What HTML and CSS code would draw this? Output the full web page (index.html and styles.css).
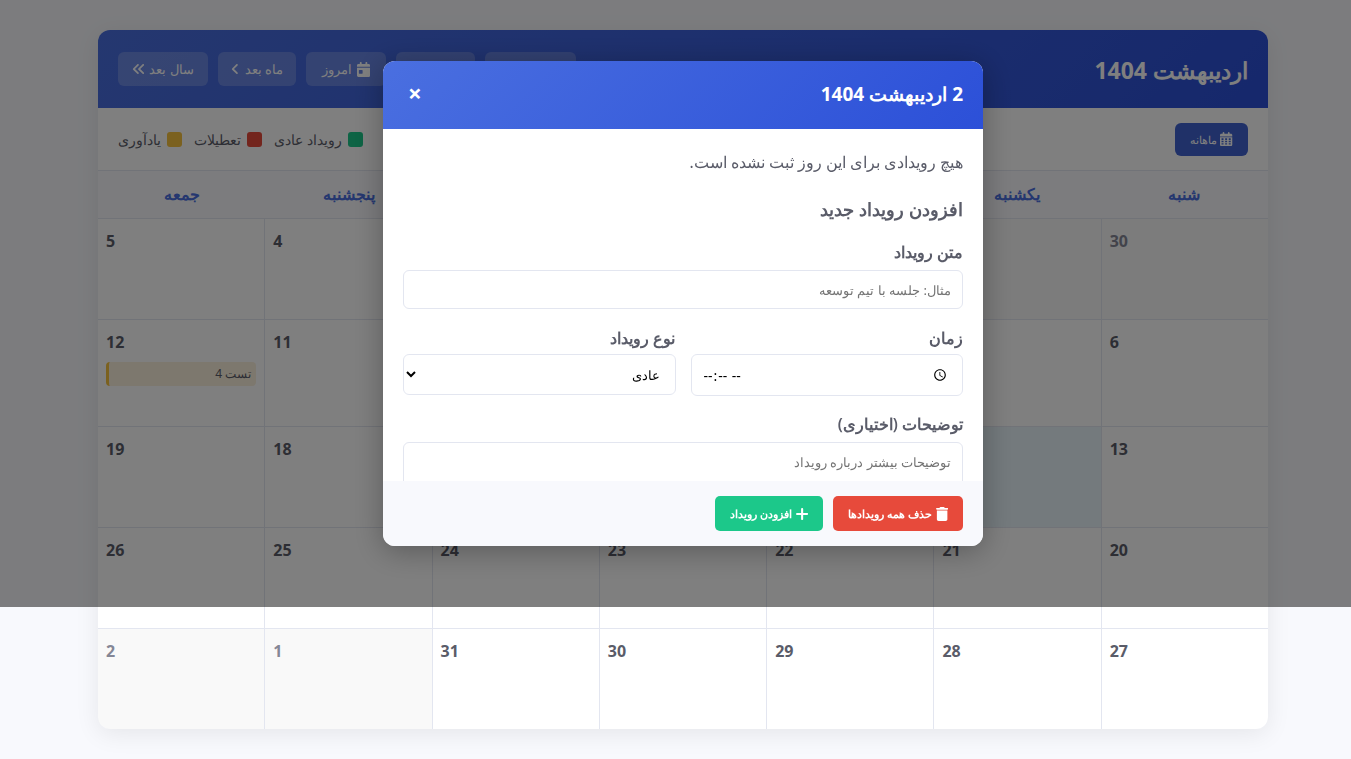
FILE: index.html
```html
<!DOCTYPE html>
<html lang="fa" dir="rtl">
<head>
<meta charset="utf-8">
<title>تقویم</title>
<link rel="stylesheet" href="styles.css">
</head>
<body>
<div class="calendar">
  <header class="cal-header">
    <h1 class="cal-title">اردیبهشت 1404</h1>
    <nav class="nav">
      <button class="nav-btn w91"><svg class="ic" viewBox="0 0 448 512"><path d="M366 273 212 427c-13 13-33 13-45 0s-13-33 0-45l131-126L167 130c-13-13-13-33 0-45s33-13 45 0l154 143c13 12 13 32 0 45zM214 273 60 427c-13 13-33 13-45 0s-13-33 0-45l131-126L15 130C2 117 2 97 15 85s33-13 45 0l154 143c13 12 13 32 0 45z"/></svg>سال قبل</button>
      <button class="nav-btn w79"><svg class="ic" viewBox="0 0 320 512"><path d="M279 273 125 427c-13 13-33 13-45 0s-13-33 0-45l131-126L80 130c-13-13-13-33 0-45s33-13 45 0l154 143c13 12 13 32 0 45z"/></svg>ماه قبل</button>
      <button class="nav-btn w80"><svg class="ic ic-cal" viewBox="0 0 448 512"><path d="M128 0c18 0 32 14 32 32v32h128V32c0-18 14-32 32-32s32 14 32 32v32h48c27 0 48 21 48 48v48H0v-48c0-27 21-48 48-48h48V32c0-18 14-32 32-32zM0 192h448v272c0 27-21 48-48 48H48c-27 0-48-21-48-48V192zm80 80c-9 0-16 7-16 16v96c0 9 7 16 16 16h96c9 0 16-7 16-16v-96c0-9-7-16-16-16H80z"/></svg>امروز</button>
      <button class="nav-btn w78">ماه بعد<svg class="ic" viewBox="0 0 320 512"><path d="M41 239 195 85c13-13 33-13 45 0s13 33 0 45L109 256l131 126c13 13 13 33 0 45s-33 13-45 0L41 284c-13-12-13-32 0-45z"/></svg></button>
      <button class="nav-btn w90">سال بعد<svg class="ic" viewBox="0 0 448 512"><path d="M41 239 195 85c13-13 33-13 45 0s13 33 0 45L109 256l131 126c13 13 13 33 0 45s-33 13-45 0L41 284c-13-12-13-32 0-45zM233 239 387 85c13-13 33-13 45 0s13 33 0 45L301 256l131 126c13 13 13 33 0 45s-33 13-45 0L233 284c-13-12-13-32 0-45z"/></svg></button>
    </nav>
  </header>
  <div class="toolbar">
    <button class="view-btn"><svg class="ic" viewBox="0 0 448 512"><path d="M128 0c18 0 32 14 32 32v32h128V32c0-18 14-32 32-32s32 14 32 32v32h48c27 0 48 21 48 48v48H0v-48c0-27 21-48 48-48h48V32c0-18 14-32 32-32zM0 192h448v272c0 27-21 48-48 48H48c-27 0-48-21-48-48V192zm56 40v56h72v-56H56zm132 0v56h72v-56h-72zm132 0v56h72v-56h-72zM56 320v56h72v-56H56zm132 0v56h72v-56h-72zm132 0v56h72v-56h-72zM56 408v48h72v-48H56zm132 0v48h72v-48h-72zm132 0v48h72v-48h-72z"/></svg>ماهانه</button>
    <div class="legend">
      <span class="legend-item"><i class="swatch sw-green"></i>رویداد عادی</span>
      <span class="legend-item"><i class="swatch sw-red"></i>تعطیلات</span>
      <span class="legend-item"><i class="swatch sw-yellow"></i>یادآوری</span>
    </div>
  </div>
  <div class="weekdays">
    <div>شنبه</div><div>یکشنبه</div><div>دوشنبه</div><div>سه‌شنبه</div><div>چهارشنبه</div><div>پنجشنبه</div><div>جمعه</div>
  </div>
  <div class="grid">
    <div class="day other"><b>30</b></div><div class="day other"><b>31</b></div><div class="day"><b>1</b></div><div class="day"><b>2</b></div><div class="day"><b>3</b></div><div class="day"><b>4</b></div><div class="day"><b>5</b></div>
    <div class="day"><b>6</b></div><div class="day"><b>7</b></div><div class="day"><b>8</b></div><div class="day"><b>9</b></div><div class="day"><b>10</b></div><div class="day"><b>11</b></div><div class="day"><b>12</b><div class="event">تست 4</div></div>
    <div class="day"><b>13</b></div><div class="day today"><b>14</b></div><div class="day"><b>15</b></div><div class="day"><b>16</b></div><div class="day"><b>17</b></div><div class="day"><b>18</b></div><div class="day"><b>19</b></div>
    <div class="day"><b>20</b></div><div class="day"><b>21</b></div><div class="day"><b>22</b></div><div class="day"><b>23</b></div><div class="day"><b>24</b></div><div class="day"><b>25</b></div><div class="day"><b>26</b></div>
    <div class="day"><b>27</b></div><div class="day"><b>28</b></div><div class="day"><b>29</b></div><div class="day"><b>30</b></div><div class="day"><b>31</b></div><div class="day other"><b>1</b></div><div class="day other"><b>2</b></div>
  </div>
</div>
<div class="overlay">
  <div class="modal">
    <div class="modal-head">
      <h3 class="modal-title">2 اردیبهشت 1404</h3>
      <button class="close">×</button>
    </div>
    <div class="modal-body">
      <p class="empty">هیچ رویدادی برای این روز ثبت نشده است.</p>
      <h4 class="add-title">افزودن رویداد جدید</h4>
      <div class="field">
        <label class="lbl">متن رویداد</label>
        <input class="inp" type="text" placeholder="مثال: جلسه با تیم توسعه">
      </div>
      <div class="row">
        <div class="col">
          <label class="lbl lbl-tight">زمان</label>
          <input class="inp inp-time" type="time">
        </div>
        <div class="col">
          <label class="lbl lbl-tight">نوع رویداد</label>
          <select class="inp inp-sel"><option>عادی</option></select>
        </div>
      </div>
      <div class="field">
        <label class="lbl">توضیحات (اختیاری)</label>
        <textarea class="inp area" placeholder="توضیحات بیشتر درباره رویداد"></textarea>
      </div>
    </div>
    <div class="modal-foot">
      <button class="act danger"><svg class="ic" viewBox="0 0 448 512"><path d="M135 18C140 7 151 0 164 0h120c13 0 24 7 29 18l7 14h96c18 0 32 14 32 32s-14 32-32 32H32C14 96 0 82 0 64s14-32 32-32h96l7-14zM32 128h384v320c0 35-29 64-64 64H96c-35 0-64-29-64-64V128z"/></svg>حذف همه رویدادها</button>
      <button class="act success"><svg class="ic" viewBox="0 0 448 512"><path d="M262 72c0-21-17-38-38-38s-38 17-38 38v146H40c-21 0-38 17-38 38s17 38 38 38h146v146c0 21 17 38 38 38s38-17 38-38V294h146c21 0 38-17 38-38s-17-38-38-38H262V72z"/></svg>افزودن رویداد</button>
    </div>
  </div>
</div>
</body>
</html>
```
FILE: styles.css
```css
* { box-sizing: border-box; }
html { overflow: hidden; }
html, body { margin: 0; padding: 0; }
body {
  background: #f8f9fd;
  font-family: "Noto Sans", sans-serif;
  color: #5a5c69;
  height: 759px;
  overflow: hidden;
  padding: 30px 83px 0;
}
.calendar {
  width: 1170px;
  height: 699px;
  background: #fff;
  border-radius: 12px;
  overflow: hidden;
  box-shadow: 0 5px 25px rgba(0, 0, 0, .08);
  display: flex;
  flex-direction: column;
}
.ic { height: 1em; width: auto; fill: currentColor; flex: none; }
button { font-family: inherit; border: 0; cursor: pointer; }

.cal-header {
  height: 78px;
  padding: 0 20px;
  background: linear-gradient(135deg, #4a6fe0, #2c50d8);
  color: #fff;
  display: flex;
  justify-content: space-between;
  align-items: center;
}
.cal-title { margin: 2px 0 0; font-size: 23px; font-weight: 700; }
.nav { display: flex; gap: 10px; }
.nav-btn {
  height: 34px;
  padding: 0;
  border-radius: 6px;
  background: rgba(255, 255, 255, .2);
  color: #fff;
  font-size: 13px;
  display: flex;
  align-items: center;
  justify-content: center;
  gap: 5px;
}
.w78 { width: 78px; }
.w79 { width: 79px; }
.w80 { width: 80px; }
.w90 { width: 90px; }
.w91 { width: 91px; }
.nav-btn .ic { font-size: 14px; }
.nav-btn .ic-cal { font-size: 15px; }

.toolbar {
  height: 63px;
  padding: 0 20px;
  border-bottom: 1px solid #e3e6f0;
  display: flex;
  justify-content: space-between;
  align-items: center;
  background: #fff;
}
.view-btn {
  height: 33px;
  width: 73px;
  border-radius: 6px;
  background: #4163d0;
  color: #fff;
  font-size: 11px;
  display: flex;
  align-items: center;
  justify-content: center;
  gap: 3px;
}
.view-btn .ic { font-size: 14px; }
.legend { display: flex; gap: 12px; font-size: 14px; }
.legend-item { display: flex; align-items: center; gap: 6px; }
.swatch { width: 15px; height: 15px; border-radius: 3px; display: block; }
.sw-green { background: #1cc88a; }
.sw-red { background: #e74a3b; }
.sw-yellow { background: #f6c23e; }

.weekdays {
  height: 48px;
  display: grid;
  grid-template-columns: repeat(7, 1fr);
  background: #f8f9fd;
  border-bottom: 1px solid #e3e6f0;
  color: #4a6fe0;
  font-size: 15.5px;
  font-weight: 700;
  text-align: center;
  line-height: 47px;
}
.grid {
  flex: 1;
  display: grid;
  gap: 1px;
  background: #e3e6f0;
  grid-template-columns: repeat(7, 1fr);
  grid-template-rows: 100px 106px 100px 100px 100px;
}
.day {
  padding: 9px 8px 8px;
  background: #fff;
  display: flex;
  flex-direction: column;
  align-items: flex-end;
  font-size: 16px;
}
.day b { line-height: 27px; display: block; }
.other { background: #f9f9f9; color: #858796; }
.today { background: #e8f5fb; }
.event {
  align-self: stretch;
  margin-top: 6px;
  height: 24px;
  line-height: 24px;
  padding: 0 5px;
  background: #faf0dc;
  border-left: 3px solid #f6c23e;
  border-radius: 4px;
  font-size: 12px;
  color: #5a5c69;
}

.overlay {
  position: fixed;
  top: 0;
  left: 0;
  width: 1366px;
  height: 607px;
  background: rgba(0, 0, 0, .5);
  display: flex;
  align-items: center;
  justify-content: center;
}
.modal {
  width: 600px;
  height: 485px;
  background: #fff;
  border-radius: 12px;
  overflow: hidden;
  box-shadow: 0 5px 30px rgba(0, 0, 0, .3);
  display: flex;
  flex-direction: column;
}
.modal-head {
  height: 68px;
  flex: none;
  padding: 0 20px 2px;
  background: linear-gradient(135deg, #4a6fe0, #2c50d8);
  color: #fff;
  display: flex;
  justify-content: space-between;
  align-items: center;
}
.modal-title { margin: 0; font-size: 19px; font-weight: 700; }
.close { background: none; color: #fff; font-size: 24px; font-weight: 700; padding: 0 5px 2px; line-height: 1; }
.modal-body { flex: 1; padding: 20px; overflow: hidden; }
.empty { margin: 0 0 22px; font-size: 15.6px; line-height: 26px; }
.add-title { margin: 0 0 19px; font-size: 18.3px; font-weight: 700; line-height: 24px; }
.field { margin-bottom: 17px; }
.lbl { display: block; font-size: 15.7px; font-weight: 600; margin-bottom: 6px; line-height: 24px; }
.lbl-tight { margin-bottom: 4px; }
.inp {
  display: block;
  width: 100%;
  height: 39px;
  padding: 0 11px;
  border: 1px solid #e3e6f0;
  border-radius: 6px;
  background: #fff;
  font-family: inherit;
  font-size: 13px;
}
.inp-time { height: 42px; font-size: 14px; }
.inp-sel { height: 41px; }
.area { height: 90px; padding: 10px 11px; resize: none; }
.row { display: flex; gap: 15px; align-items: flex-start; margin-bottom: 16px; }
.col { flex: 1; }
.modal-foot {
  height: 65px;
  flex: none;
  padding: 0 20px;
  background: #f8f9fd;
  display: flex;
  align-items: center;
  gap: 10px;
}
.act {
  height: 35px;
  padding: 0 15px;
  border-radius: 5px;
  color: #fff;
  font-size: 11px;
  font-weight: 700;
  display: flex;
  align-items: center;
  gap: 4px;
}
.act .ic { font-size: 14px; }
.danger { background: #e74a3b; }
.success { background: #1cc88a; }
```
